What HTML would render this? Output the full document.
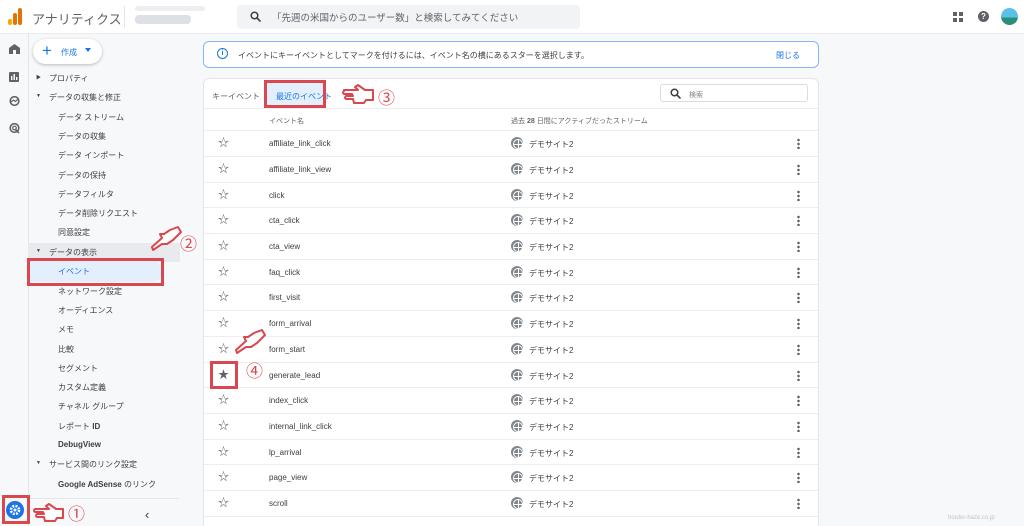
<!DOCTYPE html>
<html><head><meta charset="utf-8"><style>
*{margin:0;padding:0;box-sizing:border-box}
html,body{width:1024px;height:526px;overflow:hidden}
body{background:#f7f8fa;font-family:"Liberation Sans","Noto Sans CJK JP",sans-serif;color:#3c4043;position:relative;font-size:8px}
.a{position:absolute}
.top{left:0;top:0;width:1024px;height:34px;background:#fff;border-bottom:1px solid #e8eaed}
.rail{left:0;top:34px;width:29px;height:492px;border-right:1px solid #e3e5e8;background:#f7f8fa}
.nav div{position:absolute;font-size:8px;color:#3c4043;white-space:nowrap}
.card{left:203px;top:78px;width:616px;height:460px;background:#fff;border:1px solid #e3e5e8;border-radius:6px}
.row{position:absolute;left:0;width:614px;height:26px;border-top:1px solid #ebedf0}
.row .s{position:absolute;left:14px;top:6px;font-size:11px;line-height:12px;color:#5f6368}
.row .n{position:absolute;left:65px;top:8px;font-size:8px;color:#3c4043}
.row .g{position:absolute;left:307px;top:6px;width:12px;height:12px;border-radius:50%;background:#80868b}
.row .g:after{content:"";position:absolute;left:2px;top:2px;width:8px;height:8px;border-radius:50%;border:1px solid #fff;background:linear-gradient(#fff,#fff) center/1px 8px no-repeat,linear-gradient(#fff,#fff) center/8px 1px no-repeat}
.row .t{position:absolute;left:325px;top:8px;font-size:8px}
.row .d{position:absolute;left:593px;top:7px;width:3px;height:11px;background:radial-gradient(circle,#5f6368 1.2px,transparent 1.4px) 0 0/3px 4px repeat-y}
.red{position:absolute;border:3px solid #d9474f}
.num{position:absolute;font-size:17px;color:#d9474f}
</style></head><body>
<div class="a top"></div>
<svg class="a" style="left:8px;top:8px" width="14" height="18"><rect x="0" y="11" width="4" height="6" rx="2" fill="#f9ab00"/><rect x="5" y="5" width="4" height="12" rx="2" fill="#e37400"/><rect x="10" y="0" width="4" height="17" rx="2" fill="#e37400"/></svg>
<div class="a" style="left:32px;top:9px;font-size:13px;color:#5f6368">アナリティクス</div>
<div class="a" style="left:124px;top:6px;width:1px;height:22px;background:#e3e5e8"></div>
<div class="a" style="left:135px;top:6px;width:70px;height:5px;background:#eceef1;border-radius:3px"></div>
<div class="a" style="left:135px;top:15px;width:56px;height:9px;background:#dde0e4;border-radius:4px"></div>
<div class="a" style="left:237px;top:5px;width:343px;height:24px;background:#f1f3f4;border-radius:4px"></div>
<svg class="a" style="left:250px;top:11px" width="11" height="11"><circle cx="4.5" cy="4.5" r="3.3" fill="none" stroke="#3c4043" stroke-width="1.5"/><path d="M7 7l3.5 3.5" stroke="#3c4043" stroke-width="1.6"/></svg>
<div class="a" style="left:272px;top:10px;font-size:9.5px;color:#5f6368">「先週の米国からのユーザー数」と検索してみてください</div>
<svg class="a" style="left:953px;top:12px" width="10" height="10" fill="#5f6368"><rect x="0" y="0" width="4" height="4"/><rect x="6" y="0" width="4" height="4"/><rect x="0" y="6" width="4" height="4"/><rect x="6" y="6" width="4" height="4"/></svg>
<div class="a" style="left:978px;top:11px;width:11px;height:11px;border-radius:50%;background:#5f6368;color:#fff;font-size:8px;font-weight:bold;text-align:center;line-height:11px">?</div>
<div class="a" style="left:1001px;top:8px;width:17px;height:17px;border-radius:50%;background:linear-gradient(#5bc0e8 55%,#2a8f7a 55%)"></div>
<div class="a rail"></div>
<svg class="a" style="left:9px;top:44px" width="12" height="95" fill="#5f6368"><path d="M0 10V4L5.5 0 11 4v6H7V6H4v4z"/><rect x="0" y="28" width="10" height="10" rx="1"/><rect x="2" y="32" width="1.4" height="4" fill="#fff"/><rect x="4.5" y="30" width="1.4" height="6" fill="#fff"/><rect x="7" y="33" width="1.4" height="3" fill="#fff"/><circle cx="5.5" cy="57" r="4.3" fill="none" stroke="#5f6368" stroke-width="1.6"/><path d="M2 58l2.5-2 2 1.5 3-3" stroke="#5f6368" stroke-width="1.2" fill="none"/><circle cx="5.5" cy="84" r="4.3" fill="none" stroke="#5f6368" stroke-width="1.6"/><circle cx="5.5" cy="84" r="1.8" fill="none" stroke="#5f6368" stroke-width="1.2"/><path d="M6 85l4 4" stroke="#5f6368" stroke-width="1.6"/></svg>
<div class="a" style="left:33px;top:39px;width:69px;height:25px;background:#fff;border-radius:13px;box-shadow:0 1px 3px rgba(0,0,0,.25)"></div>
<div class="a" style="left:42px;top:41px;font-size:17px;color:#1a73e8">+</div>
<div class="a" style="left:61px;top:47px;font-size:8px;color:#1a73e8">作成</div>
<div class="a" style="left:85px;top:48px;width:0;height:0;border-left:3px solid transparent;border-right:3px solid transparent;border-top:4px solid #1a73e8"></div>
<div class="a" style="left:28px;top:243px;width:152px;height:19px;background:#e8eaed"></div>
<div class="a" style="left:29px;top:261px;width:134px;height:21px;background:#e3effd;border-radius:0 11px 11px 0"></div>
<div class="nav">
<div style="left:36px;top:74px;font-size:5px">▶</div><div style="left:49px;top:73px">プロパティ</div>
<div style="left:36px;top:93px;font-size:5px">▼</div><div style="left:49px;top:92px">データの収集と修正</div>
<div style="left:58px;top:112px">データ ストリーム</div>
<div style="left:58px;top:131px">データの収集</div>
<div style="left:58px;top:150px">データ インポート</div>
<div style="left:58px;top:170px">データの保持</div>
<div style="left:58px;top:189px">データフィルタ</div>
<div style="left:58px;top:208px">データ削除リクエスト</div>
<div style="left:58px;top:227px">同意設定</div>
<div style="left:36px;top:248px;font-size:5px">▼</div><div style="left:49px;top:247px">データの表示</div>
<div style="left:58px;top:266px;color:#1a73e8">イベント</div>
<div style="left:58px;top:286px">ネットワーク設定</div>
<div style="left:58px;top:305px">オーディエンス</div>
<div style="left:58px;top:324px">メモ</div>
<div style="left:58px;top:344px">比較</div>
<div style="left:58px;top:363px">セグメント</div>
<div style="left:58px;top:382px">カスタム定義</div>
<div style="left:58px;top:401px">チャネル グループ</div>
<div style="left:58px;top:421px">レポート <b>ID</b></div>
<div style="left:58px;top:440px;font-weight:bold">DebugView</div>
<div style="left:36px;top:460px;font-size:5px">▼</div><div style="left:49px;top:459px">サービス間のリンク設定</div>
<div style="left:58px;top:479px"><b>Google AdSense</b> のリンク</div>
<div style="left:145px;top:507px;font-size:13px">‹</div>
</div>
<div class="a" style="left:29px;top:498px;width:150px;height:1px;background:#e3e5e8"></div>
<div class="a" style="left:6px;top:501px;width:18px;height:18px;border-radius:50%;background:#1a73e8"></div>
<svg class="a" style="left:9px;top:504px" width="12" height="12"><circle cx="6" cy="6" r="4" fill="none" stroke="#fff" stroke-width="2.6" stroke-dasharray="2 1.2"/><circle cx="6" cy="6" r="1.5" fill="#fff"/></svg>
<div class="red" style="left:2px;top:495px;width:28px;height:29px"></div>
<div class="red" style="left:27px;top:258px;width:137px;height:28px"></div>
<svg class="a" style="left:33px;top:503px" width="34" height="20"><path d="M2 6h14l-3-3 3-2 7 5h7v9h-6l-2 3H12l-1-4H4q-2-1 0-3h7l-1-2H2q-2-1 0-3z" fill="#fff" stroke="#d9474f" stroke-width="2" stroke-linejoin="round"/></svg>
<div class="num" style="left:68px;top:500px">①</div>
<svg class="a" style="left:150px;top:225px" width="32" height="26"><path d="M2 22l10-9-2-4 4 0 6-4 8-3 3 5-8 8-6 4-5 0-9 6z" fill="#fff" stroke="#d9474f" stroke-width="2" stroke-linejoin="round"/></svg>
<div class="num" style="left:180px;top:230px">②</div>
<div class="a" style="left:203px;top:41px;width:616px;height:27px;background:#fff;border:1px solid #8ab4f8;border-radius:6px"></div>
<div class="a" style="left:217px;top:48px;width:11px;height:11px;border-radius:50%;border:1.5px solid #1a73e8;color:#1a73e8;font-size:7px;text-align:center;line-height:9px;font-weight:bold">i</div>
<div class="a" style="left:238px;top:50px;font-size:8px">イベントにキーイベントとしてマークを付けるには、イベント名の横にあるスターを選択します。</div>
<div class="a" style="left:776px;top:50px;font-size:8px;color:#1a73e8">閉じる</div>
<div class="a card">
<div class="a" style="left:8px;top:12px;font-size:8px;color:#5f6368">キーイベント</div>
<div class="a" style="left:62px;top:2px;width:60px;height:26px;background:#e3effd"></div>
<div class="a" style="left:72px;top:12px;font-size:8px;color:#1a73e8">最近のイベント</div>
<div class="a" style="left:456px;top:5px;width:148px;height:18px;border:1px solid #dadce0;border-radius:3px"></div>
<svg class="a" style="left:466px;top:9px" width="11" height="11"><circle cx="4.5" cy="4.5" r="3.3" fill="none" stroke="#3c4043" stroke-width="1.5"/><path d="M7 7l3.5 3.5" stroke="#3c4043" stroke-width="1.6"/></svg>
<div class="a" style="left:485px;top:11px;font-size:7px;color:#80868b">検索</div>
<div class="a" style="left:0;top:29px;width:614px;height:1px;background:#ebedf0"></div>
<div class="a" style="left:65px;top:37px;font-size:7px;color:#5f6368">イベント名</div>
<div class="a" style="left:307px;top:37px;font-size:7px;color:#5f6368">過去 <b>28</b> 日間にアクティブだったストリーム</div>
<div class="row" style="top:51px"><span class="s">☆</span><span class="n">affiliate_link_click</span><span class="g"></span><span class="t">デモサイト2</span><span class="d"></span></div>
<div class="row" style="top:77px"><span class="s">☆</span><span class="n">affiliate_link_view</span><span class="g"></span><span class="t">デモサイト2</span><span class="d"></span></div>
<div class="row" style="top:103px"><span class="s">☆</span><span class="n">click</span><span class="g"></span><span class="t">デモサイト2</span><span class="d"></span></div>
<div class="row" style="top:128px"><span class="s">☆</span><span class="n">cta_click</span><span class="g"></span><span class="t">デモサイト2</span><span class="d"></span></div>
<div class="row" style="top:154px"><span class="s">☆</span><span class="n">cta_view</span><span class="g"></span><span class="t">デモサイト2</span><span class="d"></span></div>
<div class="row" style="top:180px"><span class="s">☆</span><span class="n">faq_click</span><span class="g"></span><span class="t">デモサイト2</span><span class="d"></span></div>
<div class="row" style="top:205px"><span class="s">☆</span><span class="n">first_visit</span><span class="g"></span><span class="t">デモサイト2</span><span class="d"></span></div>
<div class="row" style="top:231px"><span class="s">☆</span><span class="n">form_arrival</span><span class="g"></span><span class="t">デモサイト2</span><span class="d"></span></div>
<div class="row" style="top:257px"><span class="s">☆</span><span class="n">form_start</span><span class="g"></span><span class="t">デモサイト2</span><span class="d"></span></div>
<div class="row" style="top:283px"><span class="s">★</span><span class="n">generate_lead</span><span class="g"></span><span class="t">デモサイト2</span><span class="d"></span></div>
<div class="row" style="top:308px"><span class="s">☆</span><span class="n">index_click</span><span class="g"></span><span class="t">デモサイト2</span><span class="d"></span></div>
<div class="row" style="top:334px"><span class="s">☆</span><span class="n">internal_link_click</span><span class="g"></span><span class="t">デモサイト2</span><span class="d"></span></div>
<div class="row" style="top:360px"><span class="s">☆</span><span class="n">lp_arrival</span><span class="g"></span><span class="t">デモサイト2</span><span class="d"></span></div>
<div class="row" style="top:385px"><span class="s">☆</span><span class="n">page_view</span><span class="g"></span><span class="t">デモサイト2</span><span class="d"></span></div>
<div class="row" style="top:411px"><span class="s">☆</span><span class="n">scroll</span><span class="g"></span><span class="t">デモサイト2</span><span class="d"></span></div>
<div class="row" style="top:437px"></div>
</div>
<div class="red" style="left:264px;top:80px;width:62px;height:28px"></div>
<svg class="a" style="left:342px;top:84px" width="36" height="22"><path d="M2 6h14l-3-3 3-2 7 5h8v10h-7l-2 3H12l-1-4H4q-2-1 0-3h7l-1-2H2q-2-1 0-3z" fill="#fff" stroke="#d9474f" stroke-width="2" stroke-linejoin="round"/></svg>
<div class="num" style="left:378px;top:84px">③</div>
<div class="red" style="left:210px;top:361px;width:28px;height:28px"></div>
<svg class="a" style="left:234px;top:328px" width="32" height="26"><path d="M2 22l10-9-2-4 4 0 6-4 8-3 3 5-8 8-6 4-5 0-9 6z" fill="#fff" stroke="#d9474f" stroke-width="2" stroke-linejoin="round"/></svg>
<div class="num" style="left:246px;top:357px">④</div>
<div class="a" style="left:948px;top:515px;font-size:6px;color:#c0c4c8">border-haze.co.jp</div>
</body></html>
